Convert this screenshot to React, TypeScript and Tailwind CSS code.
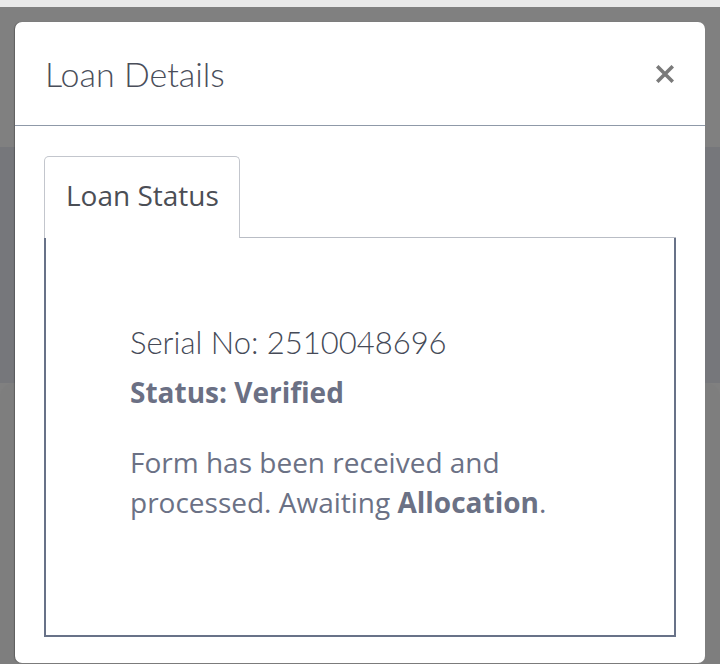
import React from "react";

function CloseIcon() {
  return (
    <svg width="18" height="18" viewBox="0 0 18 18" aria-hidden="true">
      <path d="M2.5 2.5 L15.5 15.5 M15.5 2.5 L2.5 15.5" stroke="#7a7a7a" strokeWidth="3.6" strokeLinecap="square" />
    </svg>
  );
}

export default function App() {
  return (
    <div className="relative h-[664px] w-[720px] overflow-hidden bg-[#808080]">
      {/* page behind the backdrop */}
      <div className="h-[7px] bg-[#e9e9e9]" />
      <div className="h-[140px]" />
      <div className="h-[236px] bg-[#76777b]" />
      <div className="h-[300px] rounded-tl-[14px] rounded-tr-[14px] bg-[#7e7e7e]" />

      {/* modal */}
      <div className="absolute left-[15px] top-[22px] flex h-[641px] w-[690px] flex-col rounded-[7px] bg-white shadow-[-1px_0_1px_rgba(0,0,0,0.25)]">
        <div className="flex h-[104px] items-center justify-between border-b border-[#8f99a8] pl-[30px] pr-[31px]">
          <h2 className="font-['Lato',sans-serif] text-[34px] font-light leading-none text-[#4a4e5a]">
            Loan Details
          </h2>
          <button className="flex h-[18px] w-[18px] items-center justify-center" aria-label="Close">
            <CloseIcon />
          </button>
        </div>

        <div className="flex flex-1 flex-col px-[29px] pb-[26px] pt-[30px]">
          <div className="flex border-b border-[#b9bdc5]">
            <div className="-mb-px flex h-[82px] w-[196px] items-center rounded-t-[5px] border border-b-0 border-[#c3c6cd] bg-white pb-[5px] pl-[21px] font-['Open_Sans',sans-serif] text-[28px] text-[#4b4e55]">
              Loan Status
            </div>
          </div>
          <div className="flex-1 border-x-2 border-b-2 border-[#687288] pl-[84px] pr-[70px] pt-[84px]">
            <p className="font-['Lato',sans-serif] text-[31px] font-light leading-[40px] text-[#454a57]">
              Serial No: 2510048696
            </p>
            <p className="mt-[10px] font-['Open_Sans',sans-serif] text-[28px] font-bold leading-[40px] text-[#6b7084]">
              Status: Verified
            </p>
            <p className="mt-[30px] font-['Open_Sans',sans-serif] text-[28px] leading-[40px] text-[#6b7185]">
              Form has been received and processed. Awaiting <b className="font-bold">Allocation</b>.
            </p>
          </div>
        </div>
      </div>
    </div>
  );
}
